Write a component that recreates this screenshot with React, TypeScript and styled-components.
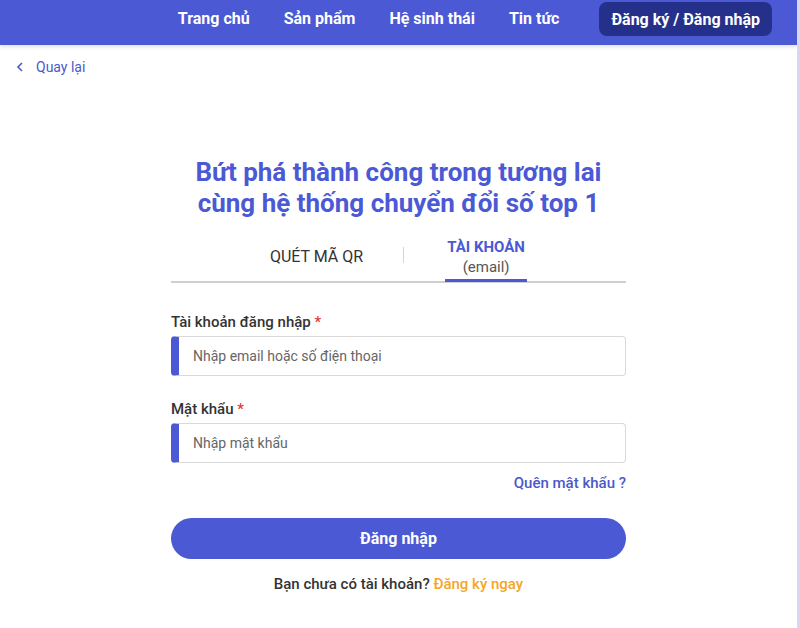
import React from "react";
import styled, { createGlobalStyle } from "styled-components";

const Global = createGlobalStyle`
  html, body { margin: 0; padding: 0; background: #fff; }
  body { font-family: Roboto, "Noto Sans", Arial, sans-serif; color: #333; }
  * { box-sizing: border-box; }
`;

const Page = styled.div`
  width: 800px;
  height: 628px;
  position: relative;
  overflow: hidden;
  border-right: 3px solid #d6d8f1;
`;

const Header = styled.header`
  height: 45px;
  background: #4b59d4;
  display: flex;
  align-items: flex-start;
  justify-content: flex-end;
  padding: 2px 25px 0 0;
  box-shadow: 0 2px 4px rgba(0, 0, 0, 0.12);
`;

const Nav = styled.nav`
  display: flex;
  align-items: center;
  gap: 34px;
  margin-right: 40px;
  height: 33px;
`;

const NavItem = styled.a`
  color: #fff;
  font-weight: 700;
  font-size: 16px;
  text-decoration: none;
`;

const AuthButton = styled.a`
  height: 34px;
  padding: 0 12px;
  display: flex;
  align-items: center;
  background: #25308a;
  border-radius: 8px;
  color: #fff;
  font-weight: 700;
  font-size: 16px;
  text-decoration: none;
`;

const BackLink = styled.a`
  display: flex;
  align-items: center;
  gap: 12px;
  margin: 14px 0 0 16px;
  color: #4b59c9;
  font-size: 14px;
  text-decoration: none;
`;

const Main = styled.main`
  width: 455px;
  margin: 82px auto 0;
  display: flex;
  flex-direction: column;
`;

const Title = styled.h1`
  margin: 0;
  text-align: center;
  color: #4b59d4;
  font-size: 26px;
  font-weight: 700;
  line-height: 31px;
`;

const Tabs = styled.div`
  margin-top: 18px;
  display: flex;
  align-items: flex-end;
  justify-content: center;
  border-bottom: 2px solid #cfcfcf;
`;

const Tab = styled.div<{ $active?: boolean }>`
  display: flex;
  flex-direction: column;
  align-items: center;
  width: ${(p) => (p.$active ? "82px" : "auto")};
  padding-bottom: ${(p) => (p.$active ? "0" : "16px")};
  border-bottom: ${(p) => (p.$active ? "3px solid #4b59d4" : "none")};
  margin-bottom: -1px;
  font-size: 16px;
  color: #333;
`;

const TabStrong = styled.span`
  color: #4b59d4;
  font-weight: 700;
  font-size: 15px;
  line-height: 20px;
`;

const TabSub = styled.span`
  color: #555;
  font-size: 15px;
  line-height: 20px;
  padding-bottom: 2px;
`;

const Divider = styled.span`
  width: 1px;
  height: 16px;
  background: #d4d4d4;
  margin: 0 41px 18px 40px;
`;

const Label = styled.label<{ $first?: boolean }>`
  margin-top: ${(p) => (p.$first ? "30px" : "24px")};
  font-size: 15px;
  font-weight: 500;
  color: #333;
  line-height: 18px;
`;

const Star = styled.span`
  color: #e53935;
`;

const InputBox = styled.div`
  margin-top: 5px;
  height: 40px;
  display: flex;
  align-items: center;
  border: 1px solid #d9d9d9;
  border-left: 8px solid #4b59d4;
  border-radius: 4px;
  padding-left: 14px;
  font-size: 14px;
  color: #666;
`;

const Forgot = styled.a`
  align-self: flex-end;
  margin-top: 11px;
  color: #4b59c9;
  font-size: 15px;
  font-weight: 500;
  text-decoration: none;
`;

const Submit = styled.button`
  margin-top: 26px;
  height: 41px;
  border: none;
  border-radius: 21px;
  background: #4b59d4;
  color: #fff;
  font-family: inherit;
  font-size: 16px;
  font-weight: 700;
`;

const Footer = styled.p`
  margin: 16px 0 0;
  text-align: center;
  font-size: 15px;
  font-weight: 500;
  color: #333;
`;

const Orange = styled.a`
  color: #f5a623;
  text-decoration: none;
`;

export default function App() {
  return (
    <Page>
      <Global />
      <Header>
        <Nav>
          <NavItem>Trang chủ</NavItem>
          <NavItem>Sản phẩm</NavItem>
          <NavItem>Hệ sinh thái</NavItem>
          <NavItem>Tin tức</NavItem>
        </Nav>
        <AuthButton>Đăng ký / Đăng nhập</AuthButton>
      </Header>
      <BackLink>
        <svg width="8" height="10" viewBox="0 0 8 10">
          <path d="M6 1 L2 5 L6 9" fill="none" stroke="#4b59c9" strokeWidth="1.6" />
        </svg>
        Quay lại
      </BackLink>
      <Main>
        <Title>
          Bứt phá thành công trong tương lai
          <br />
          cùng hệ thống chuyển đổi số top 1
        </Title>
        <Tabs>
          <Tab>QUÉT MÃ QR</Tab>
          <Divider />
          <Tab $active>
            <TabStrong>TÀI KHOẢN</TabStrong>
            <TabSub>(email)</TabSub>
          </Tab>
        </Tabs>
        <Label $first>
          Tài khoản đăng nhập <Star>*</Star>
        </Label>
        <InputBox>Nhập email hoặc số điện thoại</InputBox>
        <Label>
          Mật khẩu <Star>*</Star>
        </Label>
        <InputBox>Nhập mật khẩu</InputBox>
        <Forgot>Quên mật khẩu ?</Forgot>
        <Submit>Đăng nhập</Submit>
        <Footer>
          Bạn chưa có tài khoản? <Orange>Đăng ký ngay</Orange>
        </Footer>
      </Main>
    </Page>
  );
}
